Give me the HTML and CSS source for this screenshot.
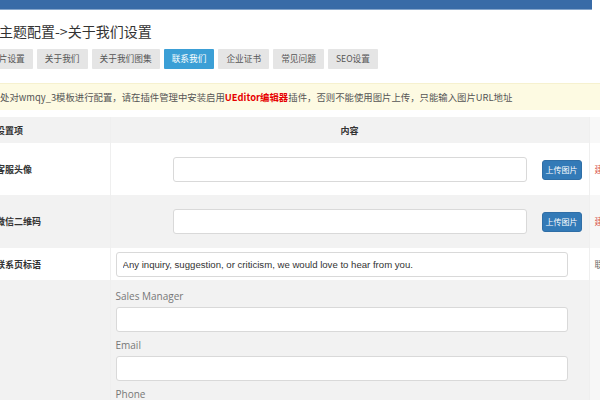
FILE: index.html
```html
<!DOCTYPE html>
<html lang="zh-CN">
<head>
<meta charset="utf-8">
<title>主题配置</title>
<link rel="stylesheet" href="styles.css">
</head>
<body>
<div class="topbar"></div>
<div class="page">
  <h2 class="title">主题配置-&gt;关于我们设置</h2>
  <div class="tabs">
    <span class="tab">图片设置</span>
    <span class="tab">关于我们</span>
    <span class="tab">关于我们图集</span>
    <span class="tab active">联系我们</span>
    <span class="tab">企业证书</span>
    <span class="tab">常见问题</span>
    <span class="tab">SEO设置</span>
  </div>
  <div class="notice">处对wmqy_3模板进行配置，请在插件管理中安装启用<b class="red">UEditor编辑器</b>插件，否则不能使用图片上传，只能输入图片URL地址</div>
  <table class="form">
    <colgroup><col class="c1"><col class="c2"><col class="c3"></colgroup>
    <thead>
      <tr><th class="lbl">设置项</th><th class="mid">内容</th><th class="side"></th></tr>
    </thead>
    <tbody>
      <tr class="r-upload">
        <td class="lbl">客服头像</td>
        <td><div class="upload"><input class="field w-up" type="text" value=""><button class="btn">上传图片</button></div></td>
        <td class="side"><span class="hint-red">建议尺寸100x100</span></td>
      </tr>
      <tr class="r-upload gray">
        <td class="lbl">微信二维码</td>
        <td><div class="upload"><input class="field w-up" type="text" value=""><button class="btn">上传图片</button></div></td>
        <td class="side"><span class="hint-red">建议尺寸200x200</span></td>
      </tr>
      <tr class="r-text">
        <td class="lbl">联系页标语</td>
        <td><div class="line"><input class="field w-full" type="text" value="Any inquiry, suggestion, or criticism, we would love to hear from you."></div></td>
        <td class="side"><span class="hint">联系页面标语</span></td>
      </tr>
      <tr class="r-multi gray">
        <td class="lbl"></td>
        <td>
          <div class="stack">
            <label class="sub">Sales Manager</label>
            <input class="field w-full" type="text" value="">
            <label class="sub">Email</label>
            <input class="field w-full" type="text" value="">
            <label class="sub">Phone</label>
            <input class="field w-full" type="text" value="">
          </div>
        </td>
        <td class="side"></td>
      </tr>
    </tbody>
  </table>
</div>
</body>
</html>
```

FILE: styles.css
```css
html, body {
  margin: 0;
  padding: 0;
  overflow: hidden;
  background: #fff;
  font-family: "Noto Sans CJK SC", "Liberation Sans", sans-serif;
  color: #333;
}

.topbar {
  height: 9px;
  margin-right: 8px;
  background: #386ba7;
  border-bottom: 1px solid #86a6cb;
}

.page {
  margin-left: -20px;
}

.title {
  margin: 0;
  padding: 12px 0 0 19px;
  font-size: 14px;
  line-height: 18px;
  font-weight: normal;
  color: #333;
}

.tabs {
  display: flex;
  gap: 4px;
  margin-top: 9px;
  padding-left: 2px;
}

.tab {
  display: block;
  height: 20px;
  line-height: 20px;
  padding: 0 8px;
  font-size: 8.7px;
  color: #555;
  background: #e5e5e5;
  border-radius: 1px;
  white-space: nowrap;
}

.tab.active {
  background: #3b9fd6;
  color: #fff;
}

.notice {
  margin-top: 14px;
  height: 27px;
  line-height: 27px;
  padding-left: 20px;
  background: #fdfae2;
  border-top: 1px solid #f6f1cf;
  box-sizing: border-box;
  font-size: 9.4px;
  color: #555;
  white-space: nowrap;
}

.notice .red {
  color: #e60000;
  font-weight: bold;
}

.form {
  margin-top: 7px;
  border-collapse: collapse;
  table-layout: fixed;
  width: 740px;
}

.form col.c1 { width: 130px; }
.form col.c2 { width: 479px; }
.form col.c3 { width: 131px; }

.form th,
.form td {
  padding: 0;
  font-size: 9px;
  vertical-align: middle;
  border-left: 1px solid #efefef;
}

.form th:first-child,
.form td:first-child {
  border-left: none;
}

.form thead th {
  height: 26px;
  background: #f2f2f2;
  font-weight: bold;
  color: #333;
}

.form thead th.side {
  background: #f8f8f8;
}

.form .lbl {
  text-align: left;
  padding-left: 16px;
  font-weight: bold;
  color: #333;
}

.form th.mid {
  text-align: center;
}

.form tr.gray td {
  background: #f2f2f2;
}

.form tr.gray td.side {
  background: #f7f7f7;
}

.r-upload td { height: 52px; }
.r-upload.gray td { height: 53px; }
.r-text td { height: 32px; }

.upload {
  display: flex;
  align-items: center;
  gap: 15px;
  padding-left: 62px;
}

.line {
  padding-left: 5px;
}

.field {
  display: block;
  flex-shrink: 0;
  box-sizing: border-box;
  height: 25px;
  margin: 0;
  padding: 0 6px;
  border: 1px solid #d9d9d9;
  border-radius: 3px;
  background: #fff;
  font-family: "Liberation Sans", Arial, sans-serif;
  font-size: 9.6px;
  color: #333;
  outline: none;
}

.w-up { width: 354px; }
.w-full { width: 452px; }

.btn {
  flex-shrink: 0;
  width: 40px;
  height: 20px;
  padding: 0;
  margin-top: 1px;
  border: 1px solid #2f6ea6;
  border-radius: 3px;
  background: #337ab7;
  color: #fff;
  font-family: "Noto Sans CJK SC", sans-serif;
  font-size: 8px;
  line-height: 18px;
}

.r-multi td {
  vertical-align: top;
}

.stack {
  display: flex;
  flex-direction: column;
  align-items: flex-start;
  padding: 9px 0 20px 5px;
}

.sub {
  flex-shrink: 0;
  font-family: "Open Sans", sans-serif;
  font-size: 10px;
  line-height: 14px;
  color: #777;
  margin-bottom: 4px;
}

.stack .field {
  margin-bottom: 6px;
}

.side {
  padding-left: 5px !important;
  white-space: nowrap;
  overflow: hidden;
}

.hint-red {
  color: #d9534f;
  font-size: 9px;
}

.hint {
  color: #666;
  font-size: 9px;
}
```
